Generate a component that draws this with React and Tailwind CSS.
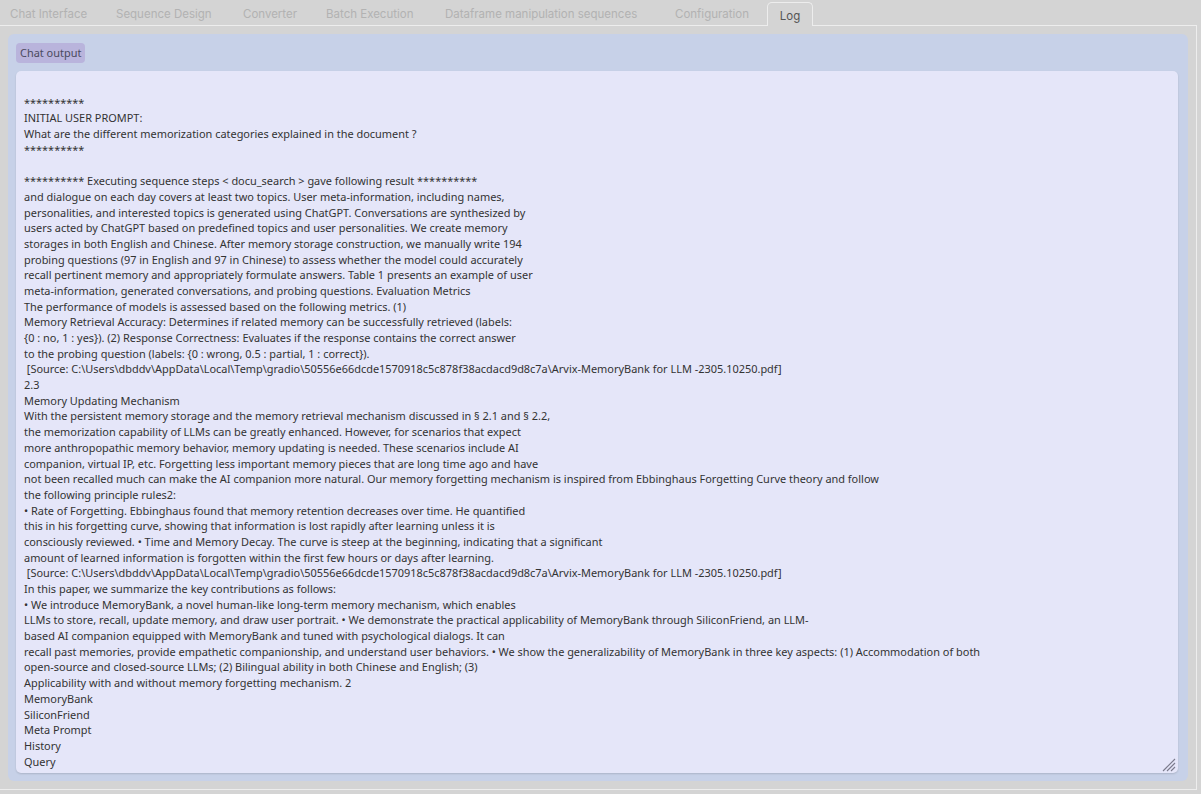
import React from "react";

const LOG = `
**********
INITIAL USER PROMPT:
What are the different memorization categories explained in the document ?
**********

********** Executing sequence steps < docu_search > gave following result **********
and dialogue on each day covers at least two topics. User meta-information, including names,
personalities, and interested topics is generated using ChatGPT. Conversations are synthesized by
users acted by ChatGPT based on predefined topics and user personalities. We create memory
storages in both English and Chinese. After memory storage construction, we manually write 194
probing questions (97 in English and 97 in Chinese) to assess whether the model could accurately
recall pertinent memory and appropriately formulate answers. Table 1 presents an example of user
meta-information, generated conversations, and probing questions. Evaluation Metrics
The performance of models is assessed based on the following metrics. (1)
Memory Retrieval Accuracy: Determines if related memory can be successfully retrieved (labels:
{0 : no, 1 : yes}). (2) Response Correctness: Evaluates if the response contains the correct answer
to the probing question (labels: {0 : wrong, 0.5 : partial, 1 : correct}).
 [Source: C:\\Users\\dbddv\\AppData\\Local\\Temp\\gradio\\50556e66dcde1570918c5c878f38acdacd9d8c7a\\Arvix-MemoryBank for LLM -2305.10250.pdf]
2.3
Memory Updating Mechanism
With the persistent memory storage and the memory retrieval mechanism discussed in § 2.1 and § 2.2,
the memorization capability of LLMs can be greatly enhanced. However, for scenarios that expect
more anthropopathic memory behavior, memory updating is needed. These scenarios include AI
companion, virtual IP, etc. Forgetting less important memory pieces that are long time ago and have
not been recalled much can make the AI companion more natural. Our memory forgetting mechanism is inspired from Ebbinghaus Forgetting Curve theory and follow
the following principle rules2:
• Rate of Forgetting. Ebbinghaus found that memory retention decreases over time. He quantified
this in his forgetting curve, showing that information is lost rapidly after learning unless it is
consciously reviewed. • Time and Memory Decay. The curve is steep at the beginning, indicating that a significant
amount of learned information is forgotten within the first few hours or days after learning.
 [Source: C:\\Users\\dbddv\\AppData\\Local\\Temp\\gradio\\50556e66dcde1570918c5c878f38acdacd9d8c7a\\Arvix-MemoryBank for LLM -2305.10250.pdf]
In this paper, we summarize the key contributions as follows:
• We introduce MemoryBank, a novel human-like long-term memory mechanism, which enables
LLMs to store, recall, update memory, and draw user portrait. • We demonstrate the practical applicability of MemoryBank through SiliconFriend, an LLM-
based AI companion equipped with MemoryBank and tuned with psychological dialogs. It can
recall past memories, provide empathetic companionship, and understand user behaviors. • We show the generalizability of MemoryBank in three key aspects: (1) Accommodation of both
open-source and closed-source LLMs; (2) Bilingual ability in both Chinese and English; (3)
Applicability with and without memory forgetting mechanism. 2
MemoryBank
SiliconFriend
Meta Prompt
History
Query`;

const tabs = [
  { label: "Chat Interface", w: "w-[106px]" },
  { label: "Sequence Design", w: "w-[127px]" },
  { label: "Converter", w: "w-[83px]" },
  { label: "Batch Execution", w: "w-[119px]" },
  { label: "Dataframe manipulation sequences", w: "w-[230px]" },
  { label: "Configuration", w: "w-[92px]" },
];

export default function App() {
  return (
    <div className="w-[1201px] h-[794px] bg-[#d4d4d4] overflow-hidden">
      <div className="w-[1197px]">
        <div className="flex items-end h-[26px] pl-[10px] border-b border-[#ededed] font-['Inter',sans-serif] text-[11.5px]">
          {tabs.map((t) => (
            <div key={t.label} className={`${t.w} h-[25px] pt-[5px] flex items-center whitespace-nowrap text-[#b2b2b2]`}>
              {t.label}
            </div>
          ))}
          <div className="w-[46px] h-[24px] -mb-px pt-[4px] flex items-center justify-center bg-[#d4d4d4] border border-b-0 border-[#ededed] rounded-t-[5px] text-[#555555]">
            Log
          </div>
        </div>
        <div className="h-[764px] p-[8px] border-r border-b border-[#ededed]">
          <div className="h-full bg-[#c7d1e8] rounded-[6px] pl-[8px] pr-[10px] pt-[9px] pb-[8px] flex flex-col gap-[8px]">
            <div className="self-start h-[20px] px-[4px] flex items-center rounded-[4px] bg-[#b9b4dc] text-[#4a4a5e] text-[10.95px] font-['Noto_Sans',sans-serif]">
              Chat output
            </div>
            <div className="relative flex-1 flex">
              <textarea
                readOnly
                value={LOG}
                className="flex-1 w-full resize-none overflow-hidden rounded-[5px] bg-[#e5e6f9] shadow-[0_1px_2px_rgba(0,0,0,0.14)] px-[8px] pt-[8px] pb-0 text-[#333333] text-[10.95px] leading-[15.69px] font-['Noto_Sans',sans-serif] whitespace-pre outline-none"
              />
              <svg className="absolute right-[2px] bottom-[1px] pointer-events-none" width="14" height="14" viewBox="0 0 14 14">
                <g stroke="#7a7a8c" strokeWidth="1.1">
                  <line x1="13" y1="1" x2="1" y2="13" />
                  <line x1="13" y1="5" x2="5" y2="13" />
                  <line x1="13" y1="9" x2="9" y2="13" />
                </g>
              </svg>
            </div>
          </div>
        </div>
      </div>
    </div>
  );
}
